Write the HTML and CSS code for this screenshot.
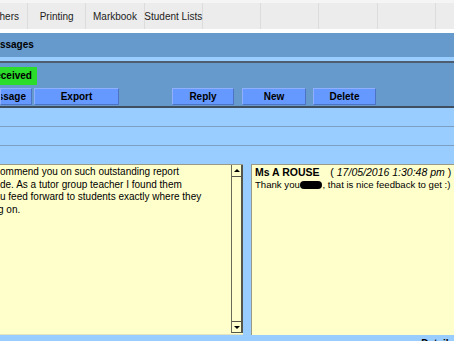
FILE: index.html
```html
<!DOCTYPE html>
<html lang="en">
<head>
  <meta charset="UTF-8">
  <title>Messages</title>
  <link rel="stylesheet" href="styles.css">
</head>
<body>
  <!-- Top menu tabs -->
  <nav class="topnav">
    <div class="tab first"><span class="cut-others">Others</span></div>
    <div class="tab">Printing</div>
    <div class="tab">Markbook</div>
    <div class="tab">Student Lists</div>
    <div class="tab"></div>
    <div class="tab"></div>
    <div class="tab"></div>
    <div class="tab"></div>
    <div class="tab"></div>
  </nav>

  <div class="page-title"><span class="cut-title">Messages</span></div>
  <div class="strip"></div>

  <!-- Toolbar -->
  <div class="toolbar">
    <div class="label-row">
      <div class="received"><span class="cut-received">Received</span></div>
    </div>
    <div class="button-row">
      <div class="btn btn-msg">Message</div>
      <div class="btn btn-export">Export</div>
      <div class="btn btn-reply">Reply</div>
      <div class="btn btn-new">New</div>
      <div class="btn btn-delete">Delete</div>
    </div>
  </div>

  <div class="fields">
    <div class="field-row"></div>
    <div class="field-row"></div>
    <div class="field-row last"></div>
  </div>

  <!-- Message panels -->
  <div class="panels">
    <div class="panel left">
      <div class="msg-text">
        <div>ommend you on such outstanding report</div>
        <div>de. As a tutor group teacher I found them</div>
        <div>u feed forward to students exactly where they</div>
        <div class="cut-g">g on.</div>
      </div>
      <div class="scrollbar">
        <div class="scroll-btn up"><span class="arrow-up"></span></div>
        <div class="scroll-track"></div>
        <div class="scroll-btn down"><span class="arrow-down"></span></div>
      </div>
    </div>
    <div class="panel right">
      <div class="reply-head">
        <span class="author">Ms A ROUSE</span>
        <span class="stamp">( <em>17/05/2016 1:30:48 pm</em> )</span>
      </div>
      <div class="reply-body">Thank you <span class="redact"></span>, that is nice feedback to get :)</div>
    </div>
  </div>

  <div class="footer"><span class="footer-link">Details</span></div>
</body>
</html>
```

FILE: styles.css
```css
html, body {
  margin: 0;
  width: 454px;
  height: 341px;
  overflow: hidden;
}
body {
  font-family: 'Liberation Sans', Arial, sans-serif;
  font-size: 10px;
  color: #000;
  background: #fff;
}

/* Top menu */
.topnav {
  display: flex;
  height: 26px;
  border-top: 3px solid #f5f5f5;
  background: #ececec;
  overflow: hidden;
}
.tab {
  flex: 0 0 auto;
  width: 57.3px;
  border-right: 1px solid #dcdcdc;
  display: flex;
  align-items: center;
  justify-content: center;
  white-space: nowrap;
  color: #222;
}
.tab.first {
  width: 27px;
  justify-content: flex-start;
}
.cut-others { margin-left: -11px; }

/* Page title bar */
.page-title {
  margin-top: 4px;
  height: 24px;
  line-height: 24px;
  background: #6699cc;
  font-weight: 700;
  white-space: nowrap;
  overflow: hidden;
}
.cut-title { margin-left: -14px; }
.strip {
  height: 4px;
  background: #99ccff;
}

/* Toolbar */
.toolbar {
  background: #6699cc;
  border-top: 2px solid #4e5e6e;
  border-bottom: 2px solid #3f4f5f;
  padding: 4px 0 1px;
}
.label-row {
  display: flex;
  height: 18px;
  margin-bottom: 3px;
}
.received {
  width: 37px;
  background: #2bdc2b;
  font-weight: 700;
  line-height: 18px;
  white-space: nowrap;
  overflow: hidden;
}
.cut-received { margin-left: -12px; }

.button-row {
  display: flex;
  height: 17px;
}
.btn {
  box-sizing: border-box;
  flex: 0 0 auto;
  height: 17px;
  background: #6699ff;
  border: 1px solid;
  border-color: #8fb0ff #4d73c4 #4d73c4 #8fb0ff;
  font-weight: 700;
  display: flex;
  align-items: center;
  justify-content: center;
  white-space: nowrap;
  overflow: hidden;
}
.btn-msg {
  width: 32px;
  justify-content: flex-end;
  padding-right: 5px;
}
.btn-export { width: 85px; margin-left: 2px; }
.btn-reply  { width: 62px; margin-left: 53px; }
.btn-new    { width: 64px; margin-left: 8px; }
.btn-delete { width: 63px; margin-left: 7px; }

/* Field rows */
.fields { background: #99ccff; }
.field-row {
  height: 18px;
  border-bottom: 1px solid #7d9fc2;
}
.field-row.last {
  border-bottom: none;
}

/* Panels */
.panels {
  display: flex;
  height: 171px;
  background: #99ccff;
}
.panel {
  box-sizing: border-box;
  background: #ffffcc;
  border-top: 1px solid #9a9a88;
  height: 171px;
}
.panel.left {
  flex: 0 0 243px;
  display: flex;
  border-bottom: 1px solid #e4e4c0;
}
.msg-text {
  flex: 1;
  min-width: 0;
  padding-top: 1px;
  line-height: 12.5px;
  white-space: nowrap;
  overflow: hidden;
}
.cut-g { margin-left: -2px; }

.scrollbar {
  box-sizing: border-box;
  flex: 0 0 12px;
  height: 168px;
  border-left: 1px solid #6a6a5a;
  border-right: 2px solid #55554a;
  border-bottom: 1px solid #55554a;
  display: flex;
  flex-direction: column;
}
.scroll-btn {
  height: 11px;
  display: flex;
  align-items: center;
  justify-content: center;
}
.scroll-btn.up { border-bottom: 1px solid #55554a; }
.scroll-btn.down { border-top: 1px solid #55554a; height: 10px; }
.scroll-track { flex: 1; }
.arrow-up {
  width: 0;
  height: 0;
  border-left: 3px solid transparent;
  border-right: 3px solid transparent;
  border-bottom: 3px solid #000;
}
.arrow-down {
  width: 0;
  height: 0;
  border-left: 3px solid transparent;
  border-right: 3px solid transparent;
  border-top: 3px solid #000;
}

.panel.right {
  flex: 1 1 0;
  min-width: 0;
  margin-left: 8px;
  border-left: 1px solid #9a9a88;
  padding: 1px 0 0 3px;
  line-height: 12px;
  white-space: nowrap;
  overflow: hidden;
}
.author {
  font-weight: 700;
  font-size: 10.5px;
}
.stamp {
  margin-left: 8px;
  font-size: 10.5px;
}
.stamp em { font-style: italic; }
.reply-body { font-size: 9.6px; }
.redact {
  display: inline-block;
  width: 22px;
  height: 8px;
  margin-left: -2px;
  background: #000;
  border-radius: 5px;
  vertical-align: -1px;
}

/* Footer */
.footer {
  height: 6px;
  background: #99ccff;
  text-align: right;
  line-height: 12px;
  padding-top: 3px;
  overflow: hidden;
}
.footer-link { font-weight: 700; }
```
